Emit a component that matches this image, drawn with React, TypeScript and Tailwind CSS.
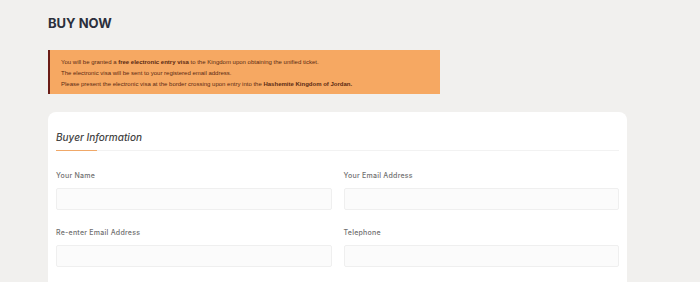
const fields = [
  { id: "name", label: "Your Name" },
  { id: "email", label: "Your Email Address" },
  { id: "email2", label: "Re-enter Email Address" },
  { id: "phone", label: "Telephone" },
];

function Field({ label }: { label: string }) {
  return (
    <div className="flex flex-col">
      <label className="text-[7px] leading-[10px] font-medium tracking-[0.25px] text-[#707070]">{label}</label>
      <input className="mt-[7px] h-[22px] rounded-[2px] border border-[#efefef] bg-[#fbfbfb] outline-none" />
    </div>
  );
}

export default function App() {
  return (
    <div className="w-[700px] h-[282px] overflow-hidden bg-[#f1f0ee] pl-12 pt-[14px] font-['Inter',sans-serif]">
      <h1 className="text-[13px] leading-[18px] font-bold text-[#2b2f3b]">BUY NOW</h1>

      <div className="mt-[18px] w-[392px] h-[44px] border-l-2 border-[#6b1d17] bg-[#f6a862] pl-[11px] pt-[7px] font-['Liberation_Sans',sans-serif] text-[6px] leading-[11px] text-[#5b2a12]">
        <p>
          You will be granted a <b>free electronic entry visa</b> to the Kingdom upon obtaining the unified ticket.
        </p>
        <p>The electronic visa will be sent to your registered email address.</p>
        <p>
          Please present the electronic visa at the border crossing upon entry into the <b>Hashemite Kingdom of Jordan.</b>
        </p>
      </div>

      <div className="mt-[18px] w-[579px] h-[200px] rounded-lg bg-white px-2 pt-[18px]">
        <h2 className="text-[10px] leading-[14px] font-medium italic text-[#444444]">Buyer Information</h2>
        <div className="relative mt-[6px] h-px bg-[#f2f2f2]">
          <div className="absolute left-0 top-0 h-px w-[41px] bg-[#f0a868]" />
        </div>
        <div className="mt-[20px] grid grid-cols-2 gap-x-3 gap-y-[18px]">
          {fields.map((f) => (
            <Field key={f.id} label={f.label} />
          ))}
        </div>
      </div>
    </div>
  );
}
